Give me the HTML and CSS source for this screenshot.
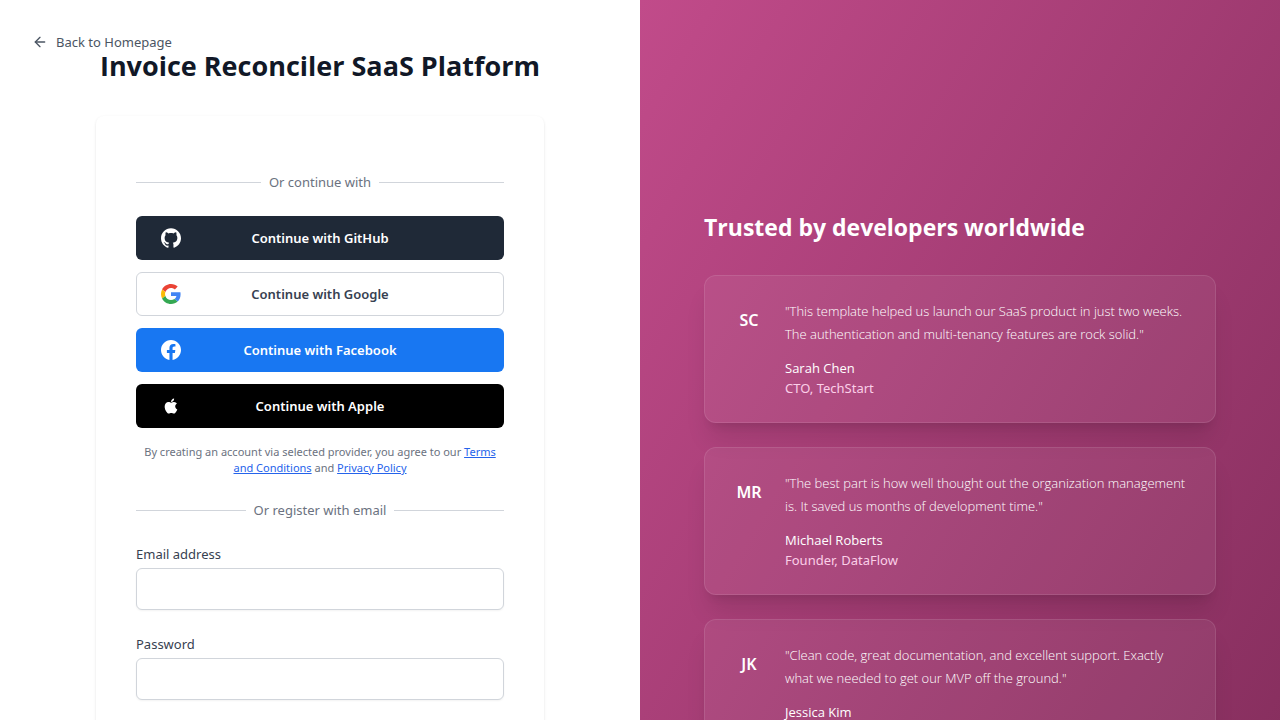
FILE: index.html
```html
<!DOCTYPE html>
<html lang="en">
<head>
<meta charset="utf-8">
<meta name="viewport" content="width=device-width, initial-scale=1">
<title>Invoice Reconciler SaaS Platform</title>
<link rel="stylesheet" href="styles.css">
</head>
<body>
<div class="shell">
  <main class="auth">
    <a class="back" href="#"><svg class="back-icon" viewBox="0 0 24 24" fill="none" stroke="currentColor" stroke-width="2" stroke-linecap="round" stroke-linejoin="round" aria-hidden="true"><path d="m12 19-7-7 7-7"/><path d="M19 12H5"/></svg>Back to Homepage</a>
    <div class="auth-column">
      <h1 class="title">Invoice Reconciler SaaS Platform</h1>
      <section class="panel">
        <div class="divider">Or continue with</div>
        <div class="providers">
          <button type="button" class="provider github"><svg class="provider-icon" viewBox="0 0 24 24" fill="currentColor" aria-hidden="true"><path d="M12 .297c-6.63 0-12 5.373-12 12 0 5.303 3.438 9.8 8.205 11.385.6.113.82-.258.82-.577 0-.285-.01-1.04-.015-2.04-3.338.724-4.042-1.61-4.042-1.61C4.422 18.07 3.633 17.7 3.633 17.7c-1.087-.744.084-.729.084-.729 1.205.084 1.838 1.236 1.838 1.236 1.07 1.835 2.809 1.305 3.495.998.108-.776.417-1.305.76-1.605-2.665-.3-5.466-1.332-5.466-5.93 0-1.31.465-2.38 1.235-3.22-.135-.303-.54-1.523.105-3.176 0 0 1.005-.322 3.3 1.23.96-.267 1.98-.399 3-.405 1.02.006 2.04.138 3 .405 2.28-1.552 3.285-1.23 3.285-1.23.645 1.653.24 2.873.12 3.176.765.84 1.23 1.91 1.23 3.22 0 4.61-2.805 5.625-5.475 5.92.42.36.81 1.096.81 2.22 0 1.606-.015 2.896-.015 3.286 0 .315.21.69.825.57C20.565 22.092 24 17.592 24 12.297c0-6.627-5.373-12-12-12"/></svg>Continue with GitHub</button>
          <button type="button" class="provider google"><svg class="provider-icon" viewBox="0 0 48 48" aria-hidden="true"><path fill="#EA4335" d="M24 9.5c3.54 0 6.71 1.22 9.21 3.6l6.85-6.85C35.9 2.38 30.47 0 24 0 14.62 0 6.51 5.38 2.56 13.22l7.98 6.19C12.43 13.72 17.74 9.5 24 9.5z"/><path fill="#4285F4" d="M46.98 24.55c0-1.57-.15-3.09-.38-4.55H24v9.02h12.94c-.58 2.96-2.26 5.48-4.78 7.18l7.73 6c4.51-4.18 7.09-10.36 7.09-17.65z"/><path fill="#FBBC05" d="M10.53 28.59c-.48-1.45-.76-2.99-.76-4.59s.27-3.14.76-4.59l-7.98-6.19C.92 16.46 0 20.12 0 24c0 3.88.92 7.54 2.56 10.78l7.97-6.19z"/><path fill="#34A853" d="M24 48c6.48 0 11.93-2.13 15.89-5.81l-7.73-6c-2.15 1.45-4.92 2.3-8.16 2.3-6.26 0-11.57-4.22-13.47-9.91l-7.98 6.19C6.51 42.62 14.62 48 24 48z"/></svg>Continue with Google</button>
          <button type="button" class="provider facebook"><svg class="provider-icon" viewBox="0 0 24 24" fill="currentColor" aria-hidden="true"><path d="M24 12.073c0-6.627-5.373-12-12-12s-12 5.373-12 12c0 5.99 4.388 10.954 10.125 11.854v-8.385H7.078v-3.47h3.047V9.43c0-3.007 1.792-4.669 4.533-4.669 1.312 0 2.686.235 2.686.235v2.953H15.83c-1.491 0-1.956.925-1.956 1.874v2.25h3.328l-.532 3.47h-2.796v8.385C19.612 23.027 24 18.062 24 12.073z"/></svg>Continue with Facebook</button>
          <button type="button" class="provider apple"><svg class="provider-icon" viewBox="0 0 24 24" fill="currentColor" aria-hidden="true"><path d="M17.05 20.28c-.98.95-2.05.8-3.08.35-1.09-.46-2.09-.48-3.24 0-1.44.62-2.2.44-3.06-.35C2.79 15.25 3.51 7.59 9.05 7.31c1.35.07 2.29.74 3.08.8 1.18-.24 2.31-.93 3.57-.84 1.51.12 2.65.72 3.4 1.8-3.12 1.87-2.38 5.98.48 7.13-.57 1.5-1.31 2.99-2.54 4.09l.01-.01zM12.03 7.25c-.15-2.23 1.66-4.07 3.74-4.25.29 2.58-2.34 4.5-3.74 4.25z"/></svg>Continue with Apple</button>
        </div>
        <p class="terms">By creating an account via selected provider, you agree to our <a href="#">Terms and Conditions</a> and <a href="#">Privacy Policy</a></p>
        <div class="divider">Or register with email</div>
        <form class="fields">
          <div class="field"><label for="email">Email address</label><input id="email" type="email" autocomplete="email"></div>
          <div class="field"><label for="password">Password</label><input id="password" type="password" autocomplete="new-password"></div>
        </form>
      </section>
    </div>
  </main>
  <aside class="praise">
    <h2 class="praise-title">Trusted by developers worldwide</h2>
    <div class="quotes">
      <article class="quote"><div class="avatar">SC</div><div class="quote-body"><p class="quote-text">"This template helped us launch our SaaS product in just two weeks. The authentication and multi-tenancy features are rock solid."</p><p class="name">Sarah Chen</p><p class="role">CTO, TechStart</p></div></article>
      <article class="quote"><div class="avatar">MR</div><div class="quote-body"><p class="quote-text">"The best part is how well thought out the organization management is. It saved us months of development time."</p><p class="name">Michael Roberts</p><p class="role">Founder, DataFlow</p></div></article>
      <article class="quote"><div class="avatar">JK</div><div class="quote-body"><p class="quote-text">"Clean code, great documentation, and excellent support. Exactly what we needed to get our MVP off the ground."</p><p class="name">Jessica Kim</p></div></article>
    </div>
  </aside>
</div>
</body>
</html>
```
FILE: styles.css
```css
*, *::before, *::after { box-sizing: border-box; }
body {
  margin: 0;
  font-family: "Noto Sans", "Open Sans", sans-serif;
  font-size: 13px;
  line-height: 20px;
  color: #111827;
  background: #fff;
}
h1, h2, p { margin: 0; }
button, input { font: inherit; }

.shell { display: grid; grid-template-columns: 1fr 1fr; min-height: 100vh; }

.auth { position: relative; padding: 48px 32px; }
.auth-column { max-width: 448px; margin: 0 auto; }
.back {
  position: absolute;
  top: 32px;
  left: 32px;
  display: flex;
  align-items: center;
  gap: 8px;
  color: #4b5563;
  text-decoration: none;
}
.back-icon { width: 16px; height: 16px; }
.title {
  font-family: "Open Sans", "Noto Sans", sans-serif;
  font-size: 27px;
  line-height: 36px;
  font-weight: 700;
  text-align: center;
}
.panel {
  margin-top: 32px;
  padding: 56px 40px 320px;
  border-radius: 8px;
  background: #fff;
  box-shadow: 0 1px 3px rgba(0, 0, 0, 0.1), 0 1px 2px -1px rgba(0, 0, 0, 0.1);
}
.divider {
  display: flex;
  align-items: center;
  gap: 8px;
  color: #6b7280;
}
.divider::before, .divider::after {
  content: "";
  flex: 1;
  height: 1px;
  background: #d1d5db;
}
.providers { display: grid; gap: 12px; margin-top: 24px; }
.provider {
  position: relative;
  height: 44px;
  padding: 0 24px;
  border: 1px solid transparent;
  border-radius: 6px;
  font-weight: 600;
  text-align: center;
  color: #fff;
  cursor: pointer;
}
.provider-icon {
  position: absolute;
  top: 11px;
  left: 24px;
  width: 20px;
  height: 20px;
}
.github { background: #1f2937; }
.google { background: #fff; border-color: #d1d5db; color: #374151; }
.facebook { background: #1877f2; }
.apple { background: #000; }
.terms {
  margin: 16px 0 24px;
  font-size: 11px;
  line-height: 16px;
  text-align: center;
  color: #6b7280;
}
.terms a { color: #2563eb; text-decoration: underline; }
.fields { display: grid; gap: 24px; margin-top: 24px; }
.field { display: grid; gap: 4px; color: #374151; }
.field input {
  width: 100%;
  height: 42px;
  padding: 8px 12px;
  border: 1px solid #d1d5db;
  border-radius: 6px;
  background: #fff;
  box-shadow: 0 1px 2px rgba(0, 0, 0, 0.05);
}

.praise {
  padding: 211px 64px 48px;
  color: #fff;
  background: linear-gradient(to bottom right, #c14b8a, #7d2a57);
}
.praise-title {
  font-family: "Open Sans", "Noto Sans", sans-serif;
  font-size: 23px;
  line-height: 32px;
  font-weight: 700;
}
.quotes { display: grid; gap: 24px; margin-top: 32px; }
.quote {
  display: flex;
  gap: 16px;
  padding: 24px;
  border: 1px solid rgba(255, 255, 255, 0.1);
  border-radius: 12px;
  background: rgba(255, 255, 255, 0.06);
  box-shadow: 0 20px 25px -5px rgba(0, 0, 0, 0.1), 0 8px 10px -6px rgba(0, 0, 0, 0.1);
}
.avatar {
  flex: none;
  width: 40px;
  font-size: 16px;
  line-height: 40px;
  font-weight: 600;
  text-align: center;
}
.quote-text, .name { font-family: "Open Sans", "Noto Sans", sans-serif; }
.quote-text {
  margin-bottom: 12px;
  line-height: 23px;
  font-weight: 300;
  color: #fff;
}
.name { font-weight: 500; }
.role { color: #fbcfe8; }
```
